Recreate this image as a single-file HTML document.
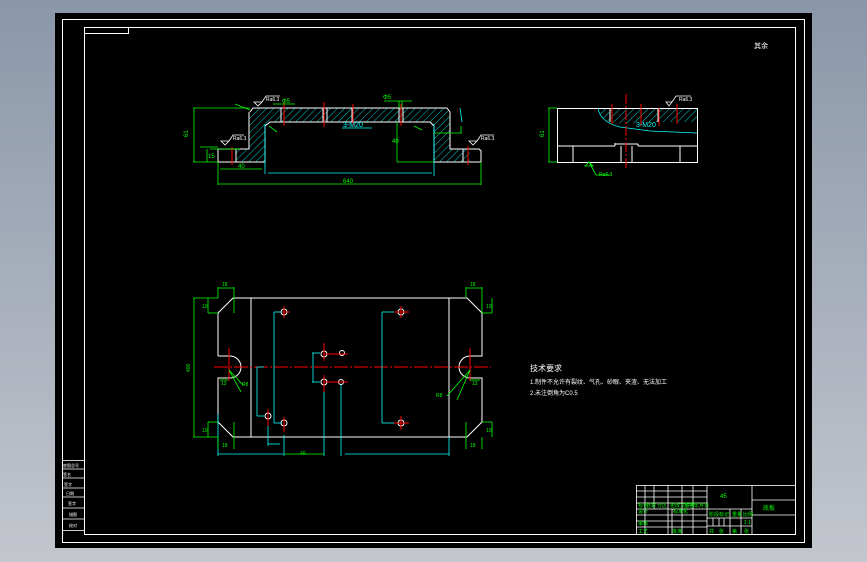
<!DOCTYPE html>
<html><head><meta charset="utf-8"><style>
html,body{margin:0;padding:0;width:867px;height:562px;overflow:hidden;background:linear-gradient(#8a97a9,#c3c6cd);}
svg{position:absolute;left:0;top:0}
text{font-family:"Liberation Sans","Noto Sans CJK SC",sans-serif}
</style></head><body>
<svg width="867" height="562" viewBox="0 0 867 562" xmlns="http://www.w3.org/2000/svg">
<defs>
<pattern id="h" width="5" height="5" patternUnits="userSpaceOnUse" patternTransform="rotate(45)">
<line x1="0" y1="0" x2="0" y2="5" stroke="#00ffff" stroke-width="0.8"/></pattern>
</defs>
<rect x="55" y="13" width="757" height="535" fill="#000"/>
<g fill="none" stroke="#fff" stroke-width="1">
<rect x="62.5" y="19.5" width="742" height="523"/>
<rect x="84.5" y="27.5" width="711" height="507"/>
<rect x="84.5" y="27.5" width="44" height="6"/>
</g>
<text x="754" y="48" fill="#fff" font-size="7">其余</text>
<g stroke="#fff" fill="none" stroke-width="0.8">
<rect x="62.5" y="460.5" width="22" height="70"/>
<line x1="62" y1="469" x2="84" y2="469"/><line x1="62" y1="478" x2="84" y2="478"/>
<line x1="62" y1="488" x2="84" y2="488"/><line x1="62" y1="497" x2="84" y2="497"/>
<line x1="62" y1="508" x2="84" y2="508"/><line x1="62" y1="519" x2="84" y2="519"/>
</g>
<g fill="#fff" font-size="4"><text x="63" y="467">底图总号</text><text x="63" y="476">签名</text><text x="64" y="486">签字</text><text x="66" y="495">日期</text><text x="68" y="505">签字</text><text x="69" y="516">描图</text><text x="69" y="527">校对</text></g>

<path d="M250 112 L253 108 L447 108 L450 112 L450 149 L470 149 L470 162 L434 162 L434 126 L430 122 L270 122 L265 126 L265 162 L236 162 L236 149 L249 149 Z" fill="url(#h)" stroke="none"/>
<g fill="none" stroke="#fff" stroke-width="1">
<path d="M250 112 L253 108 L447 108 L450 112 L450 149 L479 149 L481 151 L481 162 L434 162 L434 126 L430 122 L270 122 L265 126 L265 162 L218 162 L218 149 L249 149 L249 112"/>
<line x1="236" y1="149" x2="236" y2="162"/><line x1="463" y1="149" x2="463" y2="162"/>
<line x1="281" y1="108" x2="281" y2="122"/><line x1="323" y1="108" x2="323" y2="122"/><line x1="327" y1="108" x2="327" y2="122"/><line x1="352" y1="108" x2="352" y2="122"/><line x1="399" y1="108" x2="399" y2="122"/><line x1="403" y1="108" x2="403" y2="122"/>
</g>
<g stroke="#f00" stroke-width="1">
<line x1="284" y1="102" x2="284" y2="126"/><line x1="324" y1="102" x2="324" y2="127"/><line x1="353" y1="104" x2="353" y2="126"/><line x1="401" y1="104" x2="401" y2="126"/><line x1="232" y1="147" x2="232" y2="165"/><line x1="468" y1="146" x2="468" y2="165"/>
</g>
<g stroke="#0f0" stroke-width="0.8" fill="none">
<line x1="193" y1="108" x2="250" y2="108"/><line x1="193" y1="162" x2="218" y2="162"/><line x1="194" y1="108" x2="194" y2="162"/>
<line x1="200" y1="147" x2="218" y2="147"/><line x1="207" y1="149" x2="207" y2="162"/><line x1="210" y1="149" x2="240" y2="149"/>
<line x1="218" y1="162" x2="218" y2="185"/><line x1="481" y1="162" x2="481" y2="185"/><line x1="218" y1="184" x2="481" y2="184"/>
<line x1="220" y1="169" x2="262" y2="169"/>
<line x1="397" y1="122" x2="397" y2="162"/><line x1="397" y1="162" x2="434" y2="162"/>
<line x1="434" y1="133" x2="462" y2="133"/><line x1="461" y1="126" x2="461" y2="133"/>
<line x1="384" y1="101" x2="412" y2="101"/><line x1="399" y1="101" x2="399" y2="108"/><line x1="402" y1="101" x2="402" y2="108"/>
<line x1="273" y1="104" x2="295" y2="104"/>
<line x1="269" y1="126" x2="277" y2="132"/><line x1="414" y1="126" x2="422" y2="130"/>
<line x1="235" y1="104" x2="250" y2="110"/>
</g>
<g stroke="#0ff" stroke-width="0.8" fill="none">
<line x1="265" y1="124" x2="265" y2="174"/><line x1="434" y1="124" x2="434" y2="176"/><line x1="268" y1="173" x2="432" y2="173"/>
<line x1="342" y1="128" x2="372" y2="128"/><line x1="460" y1="108" x2="462" y2="122"/>
</g>
<g fill="#0ff" font-size="7"><text x="343" y="127">3-M20</text></g>
<g fill="#0f0" font-size="6"><text x="343" y="183">640</text><text x="282" y="103">Φ5</text><text x="383" y="99">Φ5</text><text x="238" y="168">40</text><text x="188" y="137" transform="rotate(-90 188 137)">61</text><text x="392" y="143">40</text><text x="208" y="158">15</text></g>
<g stroke="#fff" fill="none" stroke-width="0.8">
<path d="M254 102 L258 106 L262 102 Z M262 102 L266 96 L280 96"/>
<path d="M221 141 L225 145 L229 141 Z M229 141 L233 135 L244 135"/>
<path d="M469 141 L473 145 L477 141 Z M477 141 L481 135 L494 135"/>
<path d="M666 102 L669 106 L672 102 Z M672 102 L676 96 L691 96"/>
</g>
<g fill="#fff" font-size="5"><text x="266" y="101">Ra6.3</text><text x="233" y="140">Ra6.3</text><text x="481" y="140">Ra6.3</text><text x="679" y="101">Ra6.3</text></g>

<path d="M598 108 L697 108 L697 122 L655 122 Q620 125 610 122 Q600 118 598 108 Z" fill="url(#h)"/>
<g fill="none" stroke="#fff" stroke-width="1">
<rect x="557.5" y="108.5" width="140" height="54"/>
<line x1="557" y1="146" x2="615" y2="146"/><line x1="615" y1="146" x2="615" y2="143"/><line x1="615" y1="144" x2="638" y2="144"/><line x1="638" y1="144" x2="638" y2="146"/><line x1="638" y1="146" x2="697" y2="146"/>
<line x1="573" y1="146" x2="573" y2="162"/><line x1="621" y1="146" x2="621" y2="162"/><line x1="632" y1="146" x2="632" y2="162"/><line x1="680" y1="146" x2="680" y2="162"/>
<line x1="610" y1="108" x2="610" y2="122"/><line x1="658" y1="108" x2="658" y2="122"/><line x1="677" y1="108" x2="677" y2="122"/>
</g>
<path d="M598 108 Q600 122 620 127 L650 131 L697 133" fill="none" stroke="#0ff" stroke-width="0.8"/>
<g stroke="#f00" stroke-width="1"><line x1="626" y1="94" x2="626" y2="170" stroke-dasharray="10 2 2 2"/><line x1="612" y1="104" x2="612" y2="124"/><line x1="641" y1="104" x2="641" y2="126"/><line x1="659" y1="108" x2="659" y2="126"/><line x1="677" y1="104" x2="677" y2="124"/></g>
<g stroke="#0f0" stroke-width="0.8" fill="none"><line x1="548" y1="108" x2="557" y2="108"/><line x1="548" y1="162" x2="557" y2="162"/><line x1="549" y1="108" x2="549" y2="162"/><path d="M585 166 L589 162 L593 166 Z M589 162 L596 175 L610 175"/></g>
<text x="544" y="137" fill="#0f0" font-size="6" transform="rotate(-90 544 137)">61</text>
<text x="599" y="176" fill="#0f0" font-size="5">Ra6.3</text>
<text x="636" y="127" fill="#0ff" font-size="7">3-M20</text>

<g fill="none" stroke="#fff" stroke-width="1">
<path d="M218 356 L218 313 L233 298 L467 298 L482 313 L482 356 L470 356"/>
<path d="M470 378 L482 378 L482 422 L467 437 L233 437 L218 422 L218 378 L230 378"/>
<line x1="218" y1="356" x2="230" y2="356"/>
<path d="M230 356 A11 11 0 0 1 230 378"/>
<path d="M470 356 A11 11 0 0 0 470 378"/>
<line x1="251" y1="298" x2="251" y2="437"/><line x1="449" y1="298" x2="449" y2="437"/>
<circle cx="284" cy="312" r="3"/><circle cx="401" cy="312" r="3"/><circle cx="324" cy="354" r="3"/><circle cx="342" cy="353" r="2.5"/><circle cx="324" cy="382" r="3"/><circle cx="341" cy="382" r="2.5"/><circle cx="268" cy="416" r="3"/><circle cx="284" cy="423" r="3"/><circle cx="401" cy="423" r="3"/>
</g>
<g stroke="#f00" stroke-width="1">
<line x1="214" y1="367" x2="491" y2="367" stroke-dasharray="14 2 2 2"/>
<line x1="284" y1="306" x2="284" y2="318"/><line x1="277" y1="312" x2="290" y2="312"/>
<line x1="401" y1="306" x2="401" y2="318"/><line x1="394" y1="312" x2="409" y2="312"/>
<line x1="324" y1="343" x2="324" y2="361"/><line x1="324" y1="354" x2="348" y2="354"/>
<line x1="324" y1="375" x2="324" y2="393"/><line x1="324" y1="382" x2="348" y2="382"/>
<line x1="268" y1="409" x2="268" y2="426"/><line x1="284" y1="417" x2="284" y2="432"/><line x1="394" y1="423" x2="409" y2="423"/><line x1="401" y1="416" x2="401" y2="430"/>
<line x1="229" y1="348" x2="229" y2="381"/><line x1="470" y1="348" x2="470" y2="381"/>
</g>
<g stroke="#0ff" stroke-width="0.8" fill="none">
<line x1="274" y1="312" x2="274" y2="423"/><line x1="274" y1="312" x2="282" y2="312"/><line x1="274" y1="423" x2="282" y2="423"/>
<line x1="382" y1="312" x2="382" y2="423"/><line x1="382" y1="312" x2="394" y2="312"/><line x1="382" y1="423" x2="394" y2="423"/>
<line x1="313" y1="353" x2="313" y2="382"/><line x1="312" y1="353" x2="320" y2="353"/><line x1="312" y1="382" x2="320" y2="382"/>
<line x1="257" y1="367" x2="257" y2="416"/><line x1="257" y1="367" x2="264" y2="367"/><line x1="257" y1="416" x2="264" y2="416"/>
<line x1="218" y1="414" x2="218" y2="456"/><line x1="218" y1="454" x2="283" y2="454"/><line x1="284" y1="435" x2="284" y2="456"/>
<line x1="268" y1="426" x2="268" y2="446"/><line x1="268" y1="444" x2="280" y2="444"/>
<line x1="324" y1="392" x2="324" y2="456"/><line x1="341" y1="385" x2="341" y2="456"/>
<line x1="345" y1="454" x2="449" y2="454"/><line x1="449" y1="437" x2="449" y2="456"/>
</g>
<g stroke="#0f0" stroke-width="0.8" fill="none">
<line x1="193" y1="298" x2="218" y2="298"/><line x1="193" y1="437" x2="218" y2="437"/><line x1="194" y1="298" x2="194" y2="437"/>
<line x1="218" y1="287" x2="218" y2="298"/><line x1="234" y1="287" x2="234" y2="313"/><line x1="218" y1="288" x2="234" y2="288"/>
<line x1="466" y1="287" x2="466" y2="298"/><line x1="482" y1="287" x2="482" y2="313"/><line x1="466" y1="288" x2="482" y2="288"/>
<line x1="208" y1="298" x2="208" y2="313"/><line x1="208" y1="313" x2="218" y2="313"/>
<line x1="492" y1="298" x2="492" y2="313"/><line x1="482" y1="313" x2="492" y2="313"/>
<line x1="208" y1="422" x2="218" y2="422"/><line x1="208" y1="422" x2="208" y2="437"/>
<line x1="482" y1="422" x2="492" y2="422"/><line x1="492" y1="422" x2="492" y2="437"/>
<line x1="218" y1="437" x2="218" y2="449"/><line x1="234" y1="422" x2="234" y2="449"/><line x1="466" y1="422" x2="466" y2="449"/><line x1="482" y1="437" x2="482" y2="449"/>
<line x1="284" y1="454" x2="324" y2="454"/>
<line x1="229" y1="370" x2="243" y2="385"/><line x1="229" y1="370" x2="241" y2="392"/>
<line x1="470" y1="370" x2="447" y2="396"/><line x1="470" y1="370" x2="457" y2="400"/>
<line x1="220" y1="380" x2="228" y2="380"/><line x1="470" y1="380" x2="480" y2="380"/>
</g>
<g fill="#0f0" font-size="5">
<text x="222" y="286">18</text><text x="470" y="286">18</text><text x="222" y="447">18</text><text x="470" y="447">18</text>
<text x="202" y="308">10</text><text x="486" y="308">10</text><text x="202" y="432">10</text><text x="486" y="432">10</text>
<text x="190" y="372" transform="rotate(-90 190 372)">400</text>
<text x="300" y="455">40</text><text x="221" y="385">13</text><text x="472" y="385">13</text>
<text x="242" y="386">R8</text><text x="436" y="397">R8</text>
</g>

<g fill="#fff" font-size="7">
<text x="530" y="371" font-size="8">技术要求</text>
<text x="530" y="384" font-size="6">1.制件不允许有裂纹、气孔、砂眼、夹渣、无法加工</text>
<text x="530" y="395" font-size="6">2.未注倒角为C0.5</text>
</g>

<g stroke="#fff" stroke-width="0.8" fill="none">
<rect x="636.5" y="485.5" width="159" height="49"/>
<line x1="707" y1="485" x2="707" y2="535"/><line x1="752" y1="485" x2="752" y2="535"/>
<line x1="752" y1="500" x2="796" y2="500"/><line x1="752" y1="515" x2="796" y2="515"/>
<line x1="707" y1="509" x2="752" y2="509"/><line x1="707" y1="518" x2="752" y2="518"/><line x1="707" y1="526" x2="752" y2="526"/>
<line x1="730" y1="509" x2="730" y2="535"/><line x1="741" y1="509" x2="741" y2="535"/>
<line x1="713" y1="518" x2="713" y2="526"/><line x1="719" y1="518" x2="719" y2="526"/><line x1="724" y1="518" x2="724" y2="526"/>
<line x1="636" y1="491" x2="707" y2="491"/><line x1="636" y1="497" x2="707" y2="497"/><line x1="636" y1="503" x2="707" y2="503"/><line x1="636" y1="509" x2="707" y2="509"/><line x1="636" y1="515" x2="707" y2="515"/><line x1="636" y1="521" x2="707" y2="521"/><line x1="636" y1="527" x2="707" y2="527"/>
<line x1="645" y1="485" x2="645" y2="535"/><line x1="654" y1="485" x2="654" y2="509"/><line x1="668" y1="485" x2="668" y2="535"/><line x1="672" y1="509" x2="672" y2="535"/><line x1="682" y1="485" x2="682" y2="535"/><line x1="693" y1="485" x2="693" y2="535"/>
</g>
<g fill="#0f0" font-size="5">
<text x="638" y="507">标记</text><text x="646" y="507">处数</text><text x="657" y="507">分区</text><text x="670" y="507">更改文件号</text><text x="684" y="507">签名</text><text x="694" y="507">年月日</text>
<text x="638" y="513">设计</text><text x="673" y="513">标准化</text><text x="638" y="525">审核</text><text x="638" y="533">工艺</text><text x="672" y="533">批准</text>
<text x="720" y="498" font-size="6">45</text><text x="763" y="510" font-size="6">底板</text>
<text x="709" y="516">阶段标记</text><text x="732" y="516">重量</text><text x="743" y="516">比例</text><text x="744" y="524">1:1</text>
<text x="709" y="533">共</text><text x="719" y="533">张</text><text x="732" y="533">第</text><text x="744" y="533">张</text>
</g>
</svg>
</body></html>
